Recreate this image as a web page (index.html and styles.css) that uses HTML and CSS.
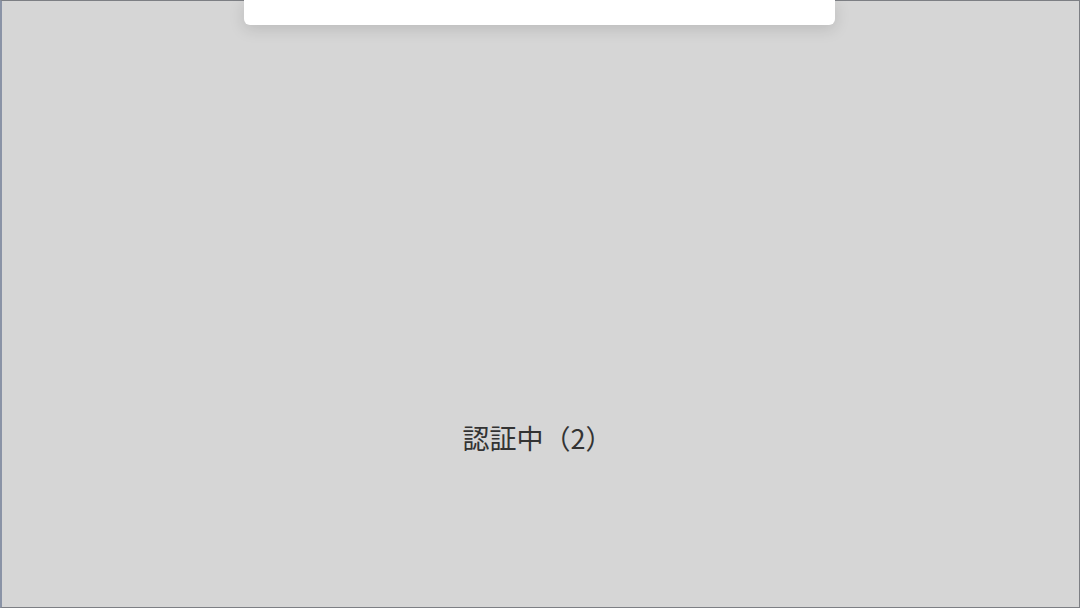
FILE: index.html
```html
<!DOCTYPE html>
<html lang="ja">
<head>
<meta charset="utf-8">
<title>認証中</title>
<link rel="stylesheet" href="styles.css">
</head>
<body>
<div class="screen">
  <div class="top-row">
    <div class="sheet"></div>
  </div>
  <div class="status">
    <span class="status-text">認証中（2）</span>
  </div>
</div>
</body>
</html>
```
FILE: styles.css
```css
html, body {
  margin: 0;
  padding: 0;
  width: 1080px;
  height: 608px;
  overflow: hidden;
  background: #d6d6d6;
}
.screen {
  box-sizing: border-box;
  width: 1080px;
  height: 608px;
  border: 1px solid #7d7f84;
  border-left: 2px solid #8a93a6;
  background: #d6d6d6;
  display: flex;
  flex-direction: column;
  font-family: "Noto Sans CJK JP", "Noto Sans", sans-serif;
}
.top-row {
  display: flex;
  justify-content: flex-start;
  padding-left: 242px;
}
.sheet {
  width: 591px;
  height: 25px;
  margin-top: -1px;
  background: #ffffff;
  border-radius: 0 0 6px 6px;
  box-shadow: 0 4px 16px rgba(0, 0, 0, 0.13);
}
.status {
  display: flex;
  justify-content: center;
  padding-top: 395px;
  padding-right: 6px;
}
.status-text {
  font-size: 27px;
  line-height: 36px;
  color: #333333;
}
```
